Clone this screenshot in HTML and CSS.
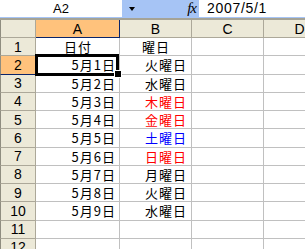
FILE: index.html
```html
<!DOCTYPE html>
<html lang="ja">
	<head>
		<meta charset="utf-8">
		<title>Book1</title>
		<link rel="stylesheet" href="styles.css">
	</head>
	<body>
		<div class="formula-bar">
			<div class="name-box">A2</div>
			<div class="bar-tools">
				<span class="drop"></span>
				<span class="fx">fx</span>
			</div>
			<div class="formula">2007/5/1</div>
		</div>

		<div class="sheet">
			<div class="hd corner"></div>
			<div class="hd col sel-col">A</div>
			<div class="hd col">B</div>
			<div class="hd col">C</div>
			<div class="hd col">D</div>

			<div class="hd row">1</div>
			<div class="cell center">日付</div>
			<div class="cell center">曜日</div>
			<div class="cell"></div>
			<div class="cell"></div>

			<div class="hd row sel-row">2</div>
			<div class="cell num date active">5月1日</div>
			<div class="cell num">火曜日</div>
			<div class="cell"></div>
			<div class="cell"></div>

			<div class="hd row">3</div>
			<div class="cell num date">5月2日</div>
			<div class="cell num">水曜日</div>
			<div class="cell"></div>
			<div class="cell"></div>

			<div class="hd row">4</div>
			<div class="cell num date">5月3日</div>
			<div class="cell num red">木曜日</div>
			<div class="cell"></div>
			<div class="cell"></div>

			<div class="hd row">5</div>
			<div class="cell num date">5月4日</div>
			<div class="cell num red">金曜日</div>
			<div class="cell"></div>
			<div class="cell"></div>

			<div class="hd row">6</div>
			<div class="cell num date">5月5日</div>
			<div class="cell num blue">土曜日</div>
			<div class="cell"></div>
			<div class="cell"></div>

			<div class="hd row">7</div>
			<div class="cell num date">5月6日</div>
			<div class="cell num red">日曜日</div>
			<div class="cell"></div>
			<div class="cell"></div>

			<div class="hd row">8</div>
			<div class="cell num date">5月7日</div>
			<div class="cell num">月曜日</div>
			<div class="cell"></div>
			<div class="cell"></div>

			<div class="hd row">9</div>
			<div class="cell num date">5月8日</div>
			<div class="cell num">火曜日</div>
			<div class="cell"></div>
			<div class="cell"></div>

			<div class="hd row">10</div>
			<div class="cell num date">5月9日</div>
			<div class="cell num">水曜日</div>
			<div class="cell"></div>
			<div class="cell"></div>

			<div class="hd row">11</div>
			<div class="cell"></div>
			<div class="cell"></div>
			<div class="cell"></div>
			<div class="cell"></div>

			<div class="hd row">12</div>
			<div class="cell"></div>
			<div class="cell"></div>
			<div class="cell"></div>
			<div class="cell"></div>
		</div>
	</body>
</html>
```

FILE: styles.css
```css
* { padding: 0; margin: 0; box-sizing: border-box; }
body {
	width: 305px;
	height: 249px;
	overflow: hidden;
	background: #fff;
	font-family: "Liberation Sans", Arial, sans-serif;
	color: #000;
}

/* name box + formula line */
.formula-bar {
	display: flex;
	height: 18px;
	border-bottom: 1px solid #a6c4f5;
}
.name-box {
	width: 122px;
	font-size: 13px;
	line-height: 17px;
	text-align: center;
}
.bar-tools {
	display: flex;
	align-items: center;
	width: 77px;
	background: #a6c4f5;
	padding-left: 7px;
}
.drop {
	width: 0;
	height: 0;
	border-left: 3.5px solid transparent;
	border-right: 3.5px solid transparent;
	border-top: 4px solid #000;
	margin-top: 1px;
}
.fx {
	margin-left: auto;
	margin-right: 3px;
	font-family: "Liberation Serif", serif;
	font-style: italic;
	font-size: 15px;
	line-height: 1;
	letter-spacing: -1px;
}
.formula {
	flex: 1;
	padding-left: 8px;
	font-size: 14px;
	line-height: 17px;
	letter-spacing: .7px;
}

/* the grid */
.sheet {
	display: grid;
	grid-template-columns: 36px 84px 72px 72px 72px;
	grid-template-rows: 18px;
	grid-auto-rows: 18.25px;
	width: max-content;
	border-top: 2px solid #a5a396;
}
.hd {
	background: #ece9d8;
	border-right: 1px solid #aca899;
	border-bottom: 1px solid #aca899;
	font-size: 14px;
	line-height: 1;
	display: flex;
	align-items: center;
	justify-content: center;
}
.row { border-left: 1px solid #8f8d80; }
.corner { border-left: 1px solid #8f8d80; }
.sel-col, .sel-row {
	background: #ffc27c;
	border-color: #0a246a;
}
.sel-row { border-left-color: #8f8d80; }
.cell {
	border-right: 1px solid #c0c0c0;
	border-bottom: 1px solid #c0c0c0;
	font-family: "Noto Sans CJK JP", sans-serif;
	font-size: 13px;
	line-height: 1;
	letter-spacing: 1px;
	display: flex;
	align-items: center;
	white-space: nowrap;
	overflow: hidden;
}
.center { justify-content: center; padding-left: 1px; }
.num { justify-content: flex-end; padding-right: 4px; }
.date { padding-right: 3px; }
.red { color: #f00; }
.blue { color: #00f; }

/* selected cell frame + fill handle */
.active { position: relative; overflow: visible; }
.active::after {
	content: "";
	position: absolute;
	top: -2px;
	left: -1px;
	right: 0;
	bottom: -2px;
	border: 3px solid #000;
}
.active::before {
	content: "";
	position: absolute;
	right: -3px;
	bottom: -4px;
	width: 6px;
	height: 6px;
	background: #000;
	border: 1px solid #fff;
	z-index: 1;
}
```
